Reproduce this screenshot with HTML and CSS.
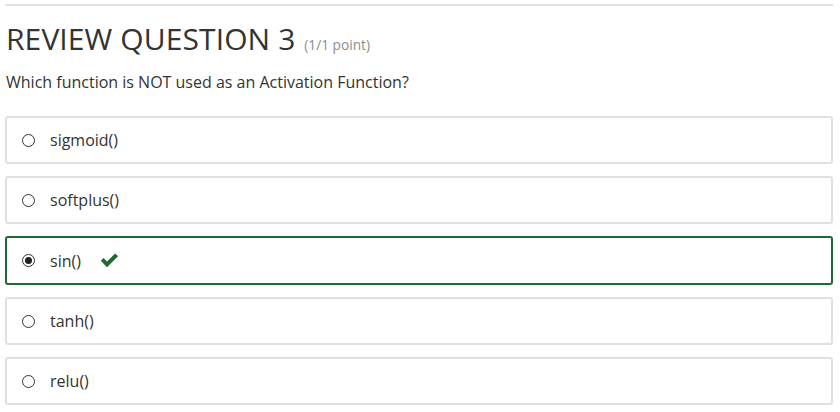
FILE: index.html
```html
<!DOCTYPE html>
<html>
<head>
<meta charset="utf-8">
<link rel="stylesheet" href="styles.css">
</head>
<body>
<div class="page">
  <hr class="rule">
  <h2 class="title">REVIEW QUESTION 3 <span class="points">(1/1 point)</span></h2>
  <p class="question">Which function is NOT used as an Activation Function?</p>
  <div class="options">
    <label class="option"><span class="radio"></span><span class="label">sigmoid()</span></label>
    <label class="option"><span class="radio"></span><span class="label">softplus()</span></label>
    <label class="option correct"><span class="radio checked"></span><span class="label">sin()</span>
      <svg class="check" width="19" height="15" viewBox="0 0 19 15"><path d="M0.8 7.8 L3.6 5.0 L7 8.4 L15.2 0.4 L18 3.2 L7 14.2 Z" fill="#1e6b32"/></svg>
    </label>
    <label class="option"><span class="radio"></span><span class="label">tanh()</span></label>
    <label class="option"><span class="radio"></span><span class="label">relu()</span></label>
  </div>
</div>
</body>
</html>
```

FILE: styles.css
```css
html, body {
  margin: 0;
  padding: 0;
  background: #fff;
}
body {
  font-family: "Open Sans", "Noto Sans", sans-serif;
  color: #333;
}
.page {
  padding: 4px 7px 0 5px;
}
.rule {
  margin: 0;
  border: 0;
  border-top: 2px solid #e2e2e2;
}
.title {
  margin: 13px 0 0 1px;
  font-weight: 400;
  font-size: 30px;
  line-height: 40px;
  letter-spacing: 0.1px;
  color: #333;
}
.points {
  font-size: 13.7px;
  letter-spacing: 0;
  color: #8c8c8c;
  margin-left: 1px;
}
.question {
  margin: 7px 0 0 1px;
  font-size: 16px;
  line-height: 20px;
  color: #333;
}
.options {
  margin-top: 24px;
  display: flex;
  flex-direction: column;
  gap: 12px;
}
.option {
  display: flex;
  align-items: center;
  height: 44px;
  border: 2px solid #e0e0e0;
  border-radius: 3px;
  padding-left: 15px;
  font-size: 16px;
  color: #333;
}
.option.correct {
  border-color: #1e6b32;
  height: 45px;
}
.radio {
  width: 11px;
  height: 11px;
  border: 1.3px solid #333;
  border-radius: 50%;
  position: relative;
  box-sizing: content-box;
  flex: none;
}
.radio.checked::after {
  content: "";
  position: absolute;
  left: 2px;
  top: 2px;
  width: 7px;
  height: 7px;
  border-radius: 50%;
  background: #222;
}
.label {
  margin-left: 15px;
}
.check {
  margin-left: 19px;
}
```
